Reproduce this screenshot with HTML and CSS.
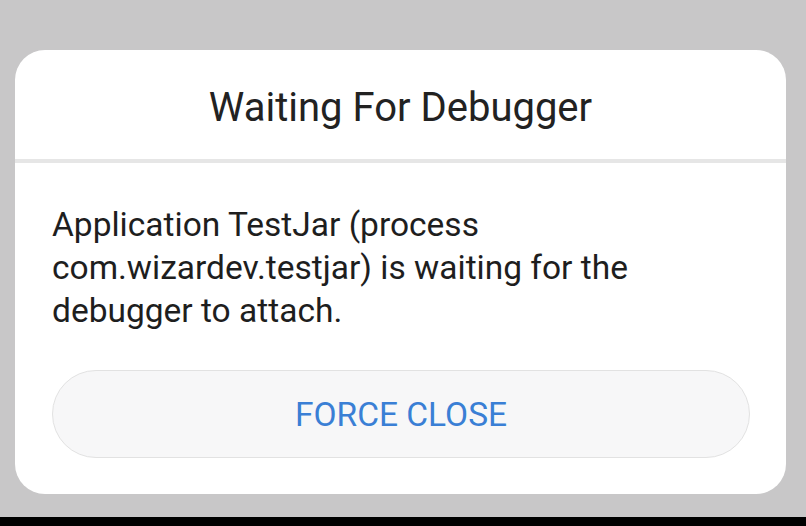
FILE: index.html
```html
<!DOCTYPE html>
<html>
<head>
<meta charset="utf-8">
<link rel="stylesheet" href="styles.css">
</head>
<body>
<div class="screen">
  <div class="dialog">
    <div class="dialog-title">Waiting For Debugger</div>
    <div class="divider"></div>
    <div class="dialog-body">
      <p class="message">Application TestJar (process com.wizardev.testjar) is waiting for the debugger to attach.</p>
      <div class="button">FORCE CLOSE</div>
    </div>
  </div>
</div>
<div class="navbar"></div>
</body>
</html>
```
FILE: styles.css
```css
html, body {
  margin: 0;
  padding: 0;
}
body {
  width: 806px;
  height: 526px;
  display: flex;
  flex-direction: column;
  background: #c8c7c8;
  font-family: Roboto, "Noto Sans", sans-serif;
  overflow: hidden;
}
.screen {
  flex: 1;
  padding: 50px 20px 0 15px;
}
.dialog {
  width: 771px;
  height: 444px;
  background: #ffffff;
  border-radius: 30px;
  display: flex;
  flex-direction: column;
}
.dialog-title {
  height: 109px;
  display: flex;
  align-items: center;
  justify-content: center;
  font-size: 40px;
  color: #222222;
  padding-top: 6px;
  box-sizing: border-box;
}
.divider {
  height: 4px;
  background: #e6e6e6;
}
.dialog-body {
  padding: 40px 36px 0 37px;
}
.message {
  margin: 0;
  font-size: 33.5px;
  line-height: 43px;
  color: #1e1e1e;
  width: 640px;
}
.button {
  margin-top: 38px;
  height: 88px;
  box-sizing: border-box;
  border: 1px solid #e2e2e2;
  border-radius: 44px;
  background: #f7f7f8;
  display: flex;
  align-items: center;
  justify-content: center;
  font-size: 33.5px;
  color: #3a7fd5;
}
.navbar {
  height: 9px;
  background: #000000;
}
```
